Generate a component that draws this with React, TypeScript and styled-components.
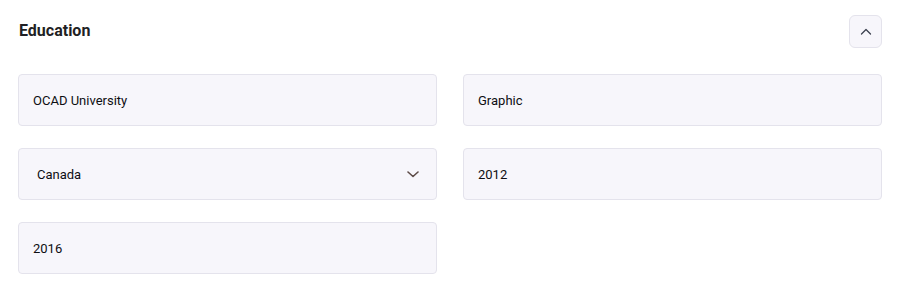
import styled, { createGlobalStyle } from "styled-components";

const GlobalStyle = createGlobalStyle`
  body {
    margin: 0;
    background: #ffffff;
    font-family: Roboto, "Liberation Sans", sans-serif;
  }
`;

const App = () => {
  return (
    <>
      <GlobalStyle />
      <Section>
        <Header>
          <Title>Education</Title>
          <CollapseButton aria-label="Collapse">
            <svg width="12" height="12" viewBox="0 0 12 12" fill="none">
              <path
                d="M1.5 8L6 3.5 10.5 8"
                stroke="#3d4250"
                strokeWidth="1.3"
                strokeLinecap="round"
                strokeLinejoin="round"
              />
            </svg>
          </CollapseButton>
        </Header>

        <Grid>
          <Field>
            <Value>OCAD University</Value>
          </Field>
          <Field>
            <Value>Graphic</Value>
          </Field>
          <Field>
            <Value $select>Canada</Value>
            <svg width="12" height="12" viewBox="0 0 12 12" fill="none">
              <path
                d="M1 4l5 4.5L11 4"
                stroke="#5e4c48"
                strokeWidth="1.6"
                strokeLinecap="round"
                strokeLinejoin="round"
              />
            </svg>
          </Field>
          <Field>
            <Value>2012</Value>
          </Field>
          <Field>
            <Value>2016</Value>
          </Field>
        </Grid>
      </Section>
    </>
  );
};

export default App;

const Section = styled.div`
  padding: 14px 18px 0 18px;
`;

const Header = styled.div`
  display: flex;
  align-items: center;
  justify-content: space-between;
  height: 33px;
  margin-bottom: 27px;
`;

const Title = styled.h3`
  margin: 0 0 0 1px;
  font-size: 16px;
  font-weight: 700;
  color: #1f1f24;
`;

const CollapseButton = styled.button`
  width: 33px;
  height: 33px;
  margin-top: 2px;
  display: flex;
  align-items: center;
  justify-content: center;
  padding: 0;
  background: #f7f6fb;
  border: 1px solid #e4e3ec;
  border-radius: 6px;
  cursor: pointer;
`;

const Grid = styled.div`
  display: grid;
  grid-template-columns: 1fr 1fr;
  column-gap: 26px;
  row-gap: 22px;
`;

const Field = styled.div`
  height: 52px;
  box-sizing: border-box;
  display: flex;
  align-items: center;
  justify-content: space-between;
  padding: 0 17px 0 14px;
  background: #f7f6fb;
  border: 1px solid #e4e3ec;
  border-radius: 4px;
`;

const Value = styled.span<{ $select?: boolean }>`
  font-size: 13px;
  font-weight: 400;
  color: #0e0e12;
  padding-left: ${(p) => (p.$select ? "4px" : "0")};
`;
